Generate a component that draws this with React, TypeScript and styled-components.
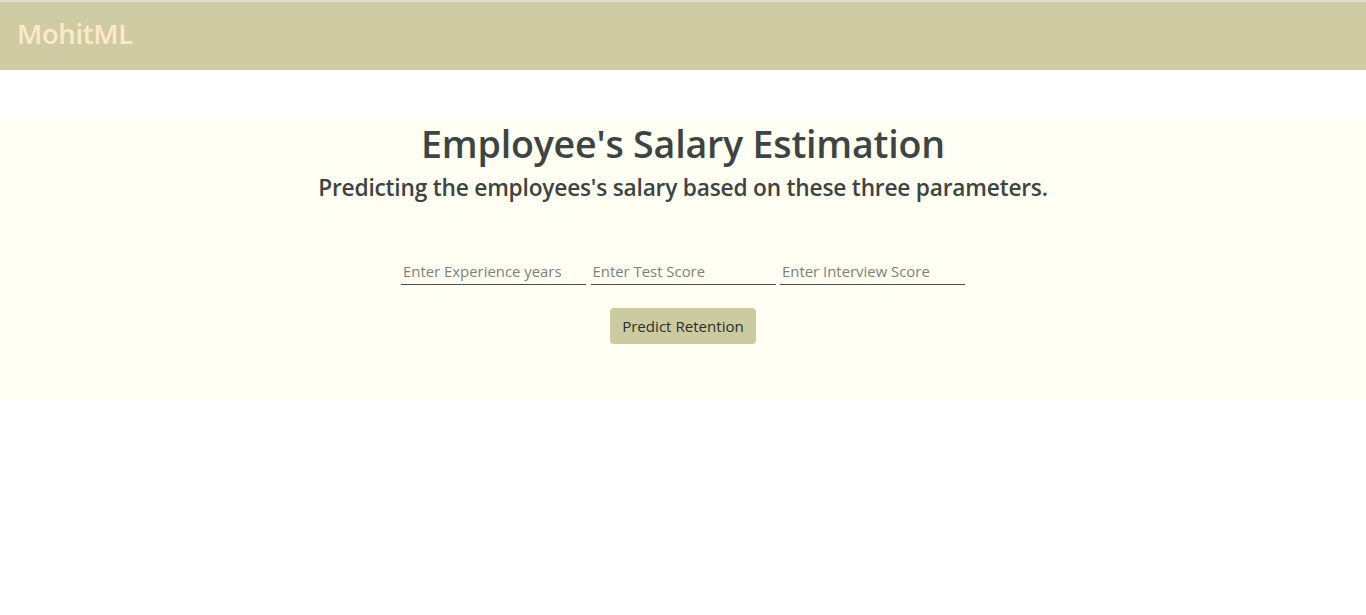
import React from 'react';
import styled, { createGlobalStyle } from 'styled-components';

const GlobalStyle = createGlobalStyle`
  body {
    margin: 0;
    background: #ffffff;
    font-family: 'Open Sans', 'Noto Sans', sans-serif;
    color: #3d4442;
  }
`;

const Page = styled.div`
  border-top: 2px solid #dcdcd4;
`;

const Navbar = styled.nav`
  display: flex;
  align-items: center;
  height: 68px;
  padding: 0 17px 5px;
  box-sizing: border-box;
  background: #cfcca3;
`;

const Brand = styled.a`
  font-size: 27.4px;
  font-weight: 600;
  color: #ffe9c9;
  text-decoration: none;
  letter-spacing: -0.3px;
`;

const Panel = styled.section`
  margin-top: 48px;
  height: 282px;
  background: #fffff3;
  display: flex;
  flex-direction: column;
  align-items: center;
  padding-top: 1px;
  box-sizing: border-box;
`;

const Title = styled.h1`
  margin: 0;
  font-size: 37.6px;
  font-weight: 600;
  line-height: 50px;
  letter-spacing: -0.2px;
`;

const Subtitle = styled.h4`
  margin: 4px 0 0;
  font-size: 22.7px;
  font-weight: 600;
  line-height: 30px;
  letter-spacing: -0.2px;
`;

const Form = styled.form`
  display: flex;
  flex-direction: column;
  align-items: center;
  margin-top: 54px;
`;

const Fields = styled.div`
  display: flex;
  gap: 4.5px;
`;

const Field = styled.input`
  width: 185px;
  height: 28px;
  box-sizing: border-box;
  padding: 0 2px;
  border: none;
  border-bottom: 1px solid #4a4f4d;
  background: transparent;
  font-family: inherit;
  font-size: 14.9px;
  color: #3d4442;
  outline: none;

  &::placeholder {
    color: #7d7f7b;
  }
`;

const Button = styled.button`
  margin-top: 23px;
  width: 146px;
  height: 36px;
  border: none;
  border-radius: 4px;
  background: #cccba0;
  color: #2b2d2c;
  font-family: inherit;
  font-size: 15.1px;
  cursor: pointer;
`;

export default function App() {
  return (
    <Page>
      <GlobalStyle />
      <Navbar>
        <Brand href="#">MohitML</Brand>
      </Navbar>
      <Panel>
        <Title>Employee's Salary Estimation</Title>
        <Subtitle>Predicting the employees's salary based on these three parameters.</Subtitle>
        <Form onSubmit={(e) => e.preventDefault()}>
          <Fields>
            <Field type="text" placeholder="Enter Experience years" />
            <Field type="text" placeholder="Enter Test Score" />
            <Field type="text" placeholder="Enter Interview Score" />
          </Fields>
          <Button type="submit">Predict Retention</Button>
        </Form>
      </Panel>
    </Page>
  );
}
